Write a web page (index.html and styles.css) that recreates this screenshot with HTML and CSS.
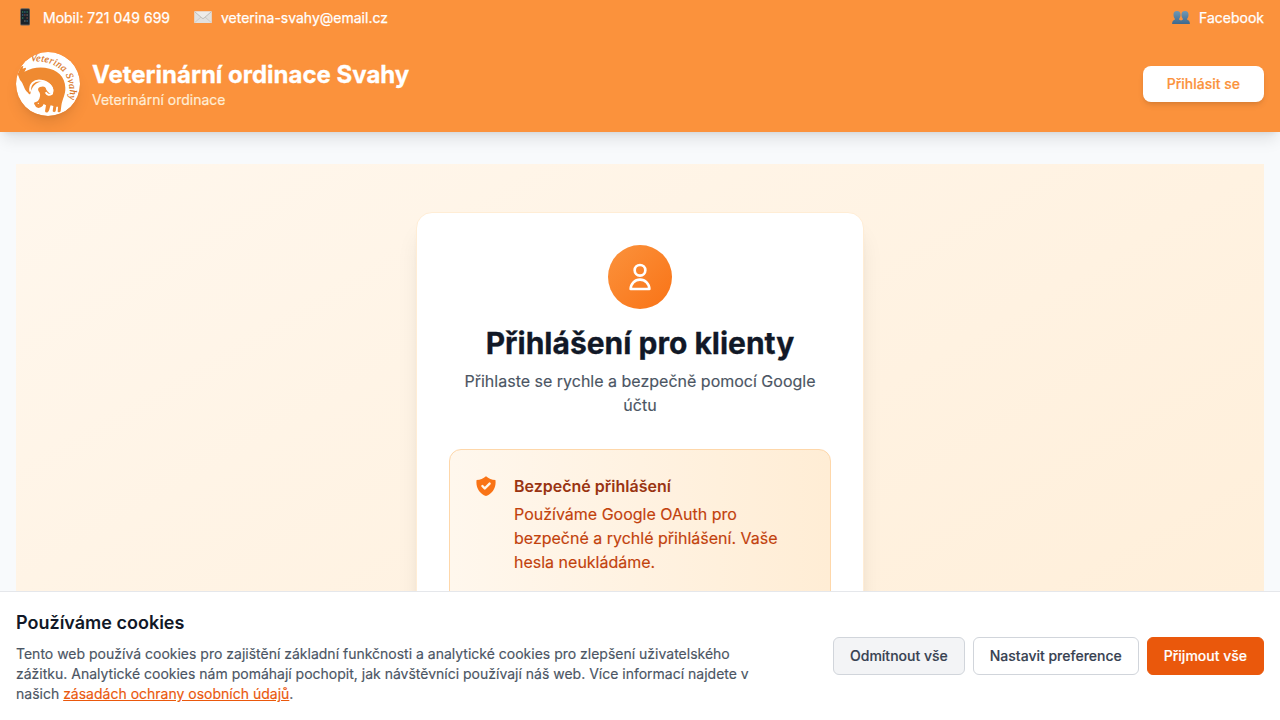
FILE: index.html
```html
<!DOCTYPE html>
<html lang="cs">
<head>
<meta charset="utf-8">
<title>Veterinární ordinace Svahy</title>
<link rel="stylesheet" href="styles.css">
</head>
<body>
<header class="header">
  <div class="topbar">
    <div class="contacts">
      <a class="contact" href="#">
        <svg class="emoji" viewBox="0 0 18 18" preserveAspectRatio="xMinYMid">
          <rect x="4.2" y=".3" width="9.8" height="17.2" rx="1.5" fill="#66615c"/>
          <rect x="5" y="1.2" width="8.2" height="15.4" rx=".5" fill="#19232a"/>
          <path d="M6 4h1.3M10.5 4h1.3M6 10h1.3" stroke="#34a46c" stroke-width="1.2"/>
          <path d="M8.2 4h1.3M6 7h1.3M10.5 13h1.3" stroke="#377fad" stroke-width="1.2"/>
          <path d="M8.2 7h1.3M10.5 10h1.3" stroke="#a95146" stroke-width="1.2"/>
          <path d="M10.5 7h1.3M8.2 13h1.3" stroke="#8c8b87" stroke-width="1.2"/>
        </svg>
        <span>Mobil: 721 049 699</span>
      </a>
      <a class="contact" href="#">
        <svg class="emoji" viewBox="0 0 18 18" preserveAspectRatio="xMinYMid">
          <rect x=".2" y="3.2" width="17.6" height="11.8" rx=".5" fill="#e2e1df"/>
          <path d="M.7 14.6 7 9M17.3 14.6 11 9" stroke="#c9c7c3" stroke-width=".8"/>
          <path d="M.7 3.7 8 10.1q1 .8 2 0l7.3-6.4" fill="#edecea" stroke="#b5b2ad" stroke-width=".8"/>
        </svg>
        <span>veterina-svahy@email.cz</span>
      </a>
    </div>
    <a class="contact" href="#">
      <svg class="emoji" viewBox="0 0 18 18" preserveAspectRatio="xMinYMid">
        <defs><linearGradient id="people" x1="0" y1="0" x2="0" y2="1"><stop stop-color="#6f98b5"/><stop offset="1" stop-color="#3f698d"/></linearGradient></defs>
        <path fill="url(#people)" d="M5 3c2.5 0 3.600 1.500 3.500 4 0 1.600-.6 2.700-1.300 3.600v1.200l1.800.8 1.800-.8v-1.200C10.100 9.700 9.500 8.600 9.500 7 9.400 4.500 10.500 3 13 3s3.600 1.500 3.500 4c0 1.600-.6 2.700-1.300 3.600v1.200c1.700.6 2.700 1.400 2.700 4.100H.1c0-2.700 1-3.500 2.700-4.100v-1.200C2.100 9.700 1.500 8.600 1.500 7 1.400 4.500 2.500 3 5 3Z"/>
      </svg>
      <span>Facebook</span>
    </a>
  </div>
  <div class="brandbar">
    <div class="brand">
      <svg class="logo" viewBox="24 24 192 192">
        <defs><path id="rim" d="M68 52Q128 48 163 80Q192 108 182 178"/></defs>
        <circle cx="120" cy="120" r="96" fill="#fff"/>
        <g fill="#ef8a31">
          <path d="M29 90 35 76Q36 67 46 66L44 74 50 72Q54 70 54 75L49 83Q78 67 111 71C149 76 171 98 172 131C173 151 163 164 160 185L158 202Q155 207 149 203L150 188 145 188 143 202Q138 207 134 202L136 186 128 184C124 192 125 201 119 205Q113 207 111 202L114 184 107 180C104 188 99 191 91 192Q82 190 79 181Q76 175 84 174Q91 172 94 164C98 154 97 148 92 142Q87 133 96 129Q112 123 115 137Q123 150 132 149C142 141 133 119 116 115C93 106 71 123 67 150Q64 153 60 146C46 135 48 119 36 108Z"/>
        </g>
        <path d="M67 143C63 120 79 107 99 110C121 113 138 130 132 149Q120 157 113 145" fill="none" stroke="#fff" stroke-width="6"/>
        <circle cx="91" cy="178" r="2" fill="#fff"/>
        <text class="logo-text"><textPath href="#rim" textLength="194">Veterina Svahy</textPath></text>
      </svg>
      <div>
        <div class="brand-name">Veterinární ordinace Svahy</div>
        <div class="brand-sub">Veterinární ordinace</div>
      </div>
    </div>
    <a class="login" href="#">Přihlásit se</a>
  </div>
</header>
<main class="main">
  <section class="hero">
    <div class="card">
      <div class="avatar">
        <svg class="user" viewBox="0 0 24 24"><path d="M16 7a4 4 0 11-8 0 4 4 0 018 0zM12 14a7 7 0 00-7 7h14a7 7 0 00-7-7z"/></svg>
      </div>
      <h1 class="title">Přihlášení pro klienty</h1>
      <p class="subtitle">Přihlaste se rychle a bezpečně pomocí Google účtu</p>
      <div class="info">
        <svg class="shield" viewBox="0 0 20 20"><path fill-rule="evenodd" clip-rule="evenodd" d="M2.166 4.999A11.954 11.954 0 0010 1.944 11.954 11.954 0 0017.834 5c.11.65.166 1.320.166 2.001 0 5.225-3.340 9.670-8 11.317C5.340 16.670 2 12.225 2 7c0-.682.057-1.350.166-2.001zm11.541 3.708a1 1 0 00-1.414-1.414L9 10.586 7.707 9.293a1 1 0 00-1.414 1.414l2 2a1 1 0 001.414 0l4-4z"/></svg>
        <div>
          <h2 class="info-title">Bezpečné přihlášení</h2>
          <p class="info-text">Používáme Google OAuth pro bezpečné a rychlé přihlášení. Vaše hesla neukládáme.</p>
        </div>
      </div>
    </div>
  </section>
</main>
<div class="cookies">
  <div class="cookie-copy">
    <h3 class="cookie-title">Používáme cookies</h3>
    <p class="cookie-text">Tento web používá cookies pro zajištění základní funkčnosti a analytické cookies pro zlepšení uživatelského zážitku. Analytické cookies nám pomáhají pochopit, jak návštěvníci používají náš web. Více informací najdete v našich <a class="cookie-link" href="#">zásadách ochrany osobních údajů</a>.</p>
  </div>
  <div class="actions">
    <button class="btn btn-muted">Odmítnout vše</button>
    <button class="btn">Nastavit preference</button>
    <button class="btn btn-primary">Přijmout vše</button>
  </div>
</div>
</body>
</html>
```
FILE: styles.css
```css
* { box-sizing: border-box; margin: 0; }
body { height: 720px; overflow: hidden; background: #f8fafc; font: 16px/24px Inter, sans-serif; color: #111827; }
a { color: inherit; text-decoration: none; }
.header { position: relative; background: #fb923c; color: #fff; box-shadow: 0 10px 15px -3px rgba(0,0,0,.1), 0 4px 6px -4px rgba(0,0,0,.1); }
.topbar { display: flex; justify-content: space-between; padding: 8px 16px; font-size: 14px; line-height: 20px; -webkit-text-stroke: .25px #fff; }
.contacts { display: flex; gap: 24px; }
.contact { display: flex; align-items: center; gap: 8px; }
.emoji { width: 19px; height: 18px; margin-top: -2px; }
.brandbar { display: flex; align-items: center; justify-content: space-between; padding: 16px; }
.brand { display: flex; align-items: center; gap: 12px; }
.logo { width: 64px; height: 64px; border-radius: 50%; box-shadow: 0 10px 15px -3px rgba(0,0,0,.1), 0 4px 6px -4px rgba(0,0,0,.1); }
.logo-text { font: italic 30px "Liberation Serif", serif; fill: #d97220; stroke: #d97220; stroke-width: .6px; }
.brand-name { padding-top: 1px; font-size: 24px; line-height: 31px; font-weight: 700; -webkit-text-stroke: .3px #fff; }
.brand-sub { font-size: 14px; line-height: 20px; color: #ffedd5; -webkit-text-stroke: .2px #ffedd5; }
.login { padding: 8px 24px; border-radius: 8px; background: #fff; color: #fb923c; font-size: 14px; line-height: 20px; font-weight: 500; -webkit-text-stroke: .2px #fb923c; box-shadow: 0 4px 6px -1px rgba(0,0,0,.1), 0 2px 4px -2px rgba(0,0,0,.1); }
.main { height: 588px; overflow: hidden; padding: 32px 16px 0; }
.hero { min-height: 720px; padding: 48px 16px; background: linear-gradient(to bottom right, #fff7ed, #ffedd5); }
.card { width: 448px; min-height: 624px; margin: 0 auto; padding: 32px; border: 1px solid #ffedd5; border-radius: 16px; background: #fff; box-shadow: 0 20px 25px -5px rgba(0,0,0,.1), 0 8px 10px -6px rgba(0,0,0,.1); text-align: center; }
.avatar { display: flex; align-items: center; justify-content: center; width: 64px; height: 64px; margin: 0 auto 16px; border-radius: 50%; background: linear-gradient(to bottom right, #fb923c, #f97316); }
.user { width: 32px; height: 32px; fill: none; stroke: #fff; stroke-width: 2; stroke-linecap: round; stroke-linejoin: round; }
.title { margin-bottom: 8px; font-size: 30px; line-height: 36px; font-weight: 700; -webkit-text-stroke: .3px #111827; }
.subtitle { margin-bottom: 32px; color: #4b5563; -webkit-text-stroke: .15px #4b5563; }
.info { display: flex; gap: 16px; min-height: 180px; padding: 24px; border: 1px solid #fed7aa; border-radius: 12px; background: linear-gradient(to right, #fff7ed, #ffedd5); text-align: left; }
.shield { flex: none; width: 24px; height: 24px; fill: #f97316; }
.info-title { margin-bottom: 4px; font-size: 16px; line-height: 24px; font-weight: 600; color: #9a3412; }
.info-text { color: #c2410c; -webkit-text-stroke: .15px #c2410c; }
.cookies { position: fixed; inset: auto 0 0; display: flex; align-items: center; justify-content: space-between; padding: 16px; border-top: 1px solid #e5e7eb; background: #fff; }
.cookie-copy { width: 768px; padding-right: 16px; }
.cookie-title { margin-bottom: 8px; padding-top: 1px; font-size: 18px; line-height: 27px; font-weight: 600; }
.cookie-text { font-size: 14px; line-height: 20px; color: #4b5563; -webkit-text-stroke: .15px #4b5563; }
.cookie-link { color: #ea580c; text-decoration: underline; -webkit-text-stroke-color: #ea580c; }
.actions { display: flex; gap: 8px; }
.btn { padding: 8px 16px; border: 1px solid #d1d5db; border-radius: 6px; background: #fff; color: #374151; font: 500 14px/20px Inter, sans-serif; -webkit-text-stroke: .15px currentColor; white-space: nowrap; }
.btn-muted { background: #f3f4f6; }
.btn-primary { border-color: #ea580c; background: #ea580c; color: #fff; }
```
